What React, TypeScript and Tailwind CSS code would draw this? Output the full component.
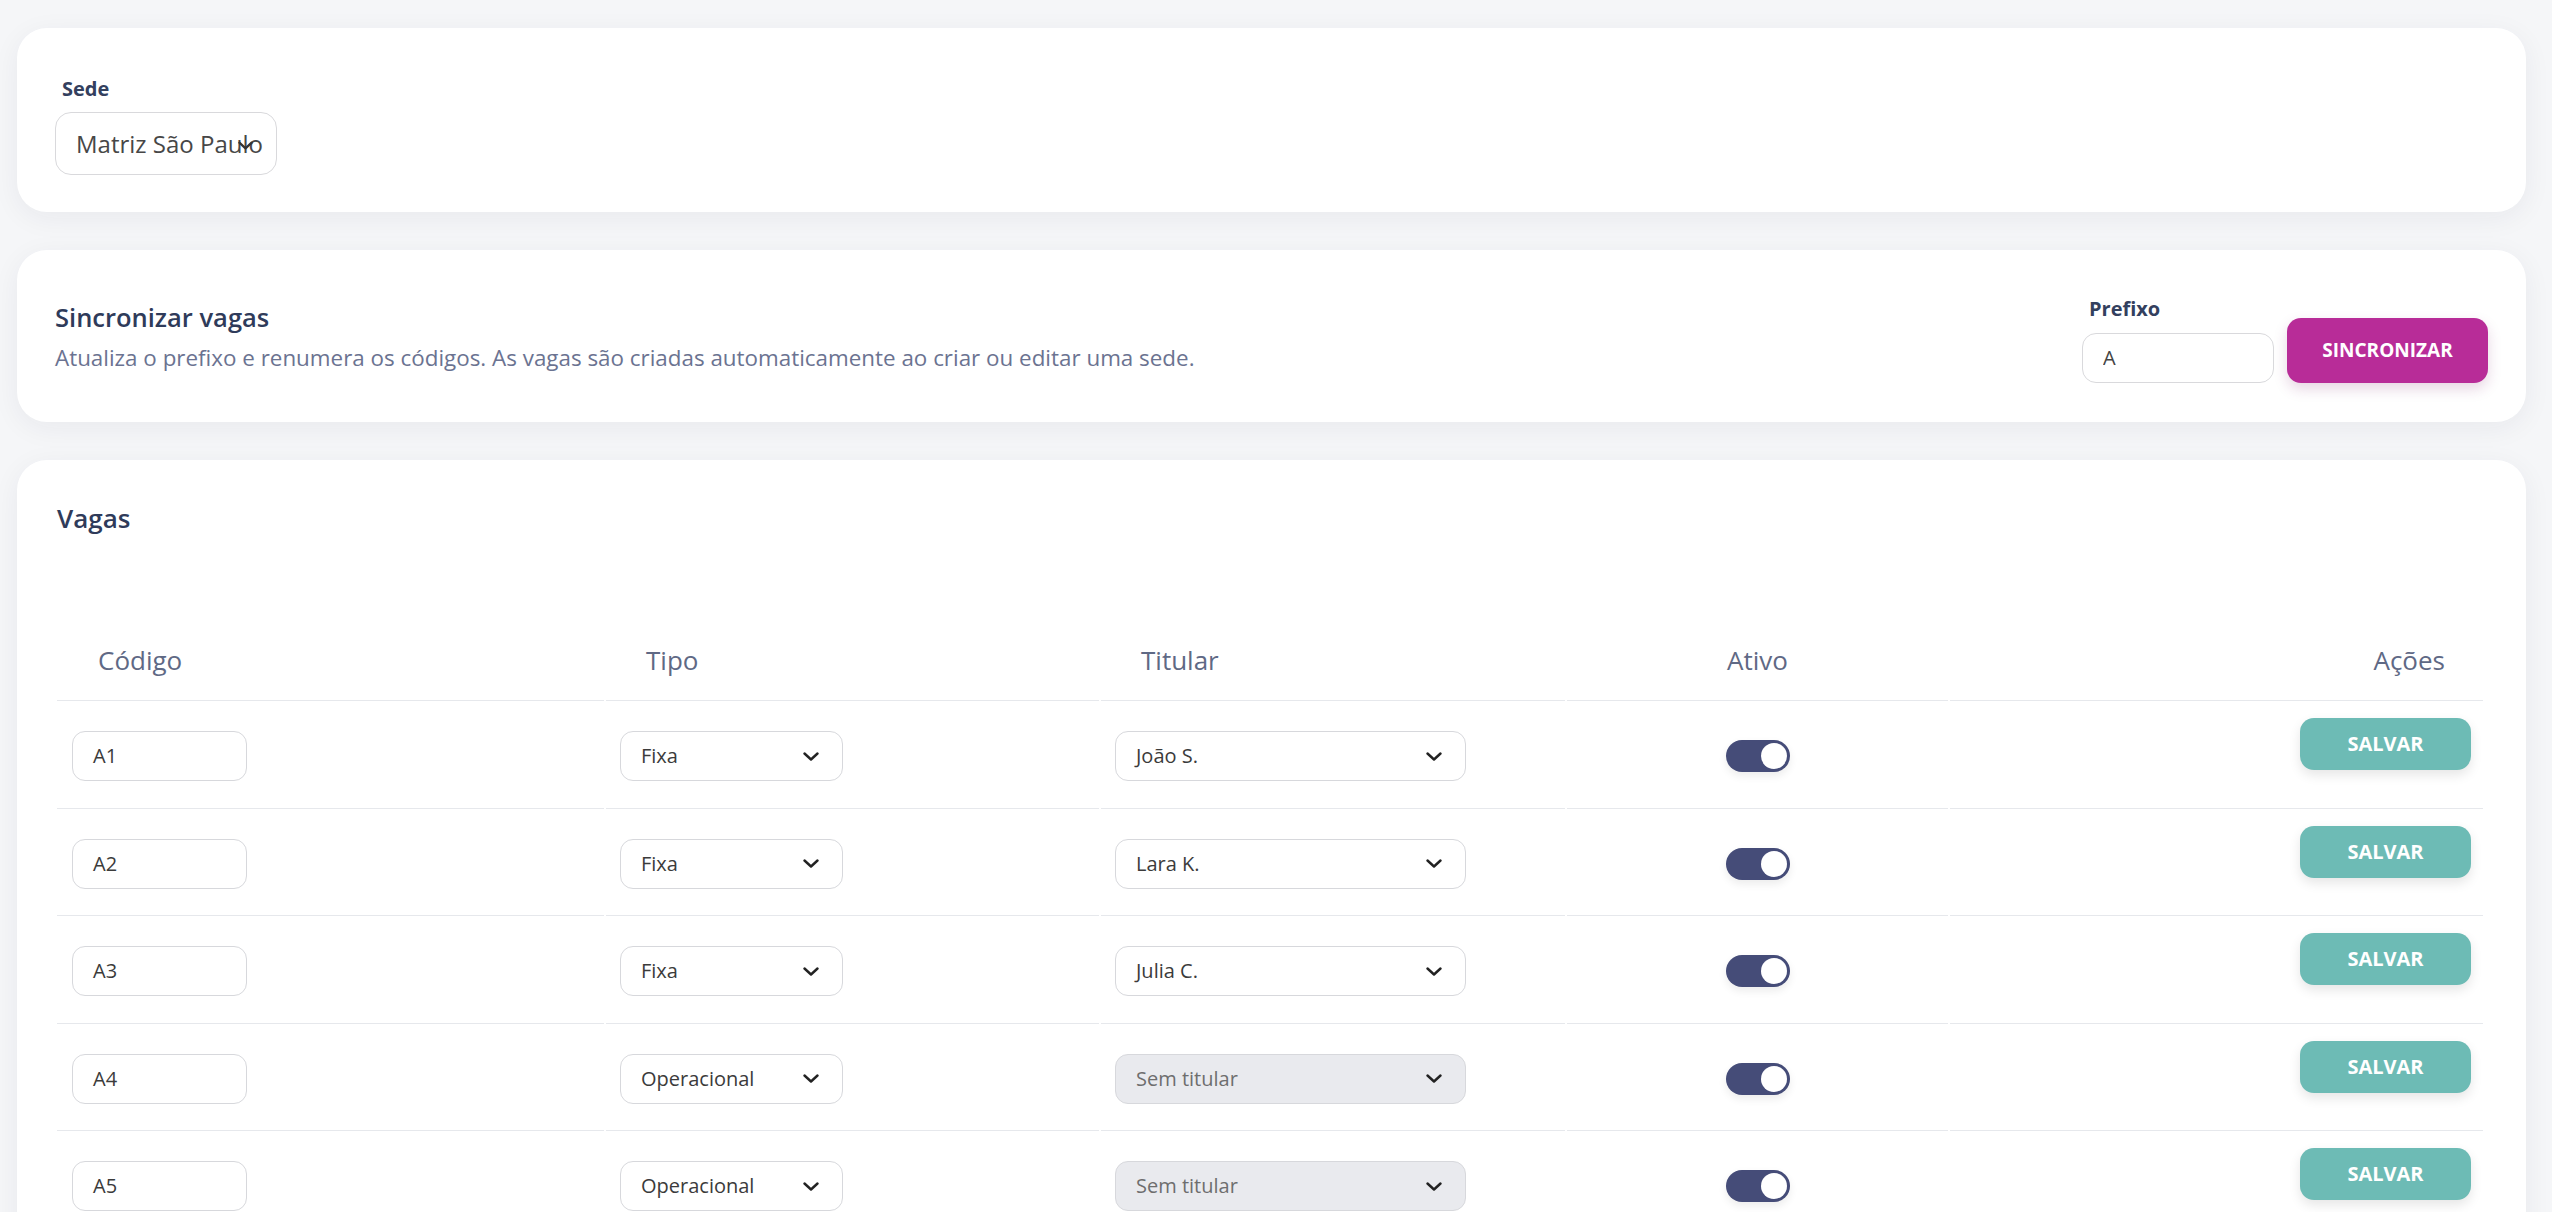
import React, { useState } from 'react';

type Vaga = {
  codigo: string;
  tipo: string;
  titular: string | null;
  ativo: boolean;
};

const vagasIniciais: Vaga[] = [
  { codigo: 'A1', tipo: 'Fixa', titular: 'João S.', ativo: true },
  { codigo: 'A2', tipo: 'Fixa', titular: 'Lara K.', ativo: true },
  { codigo: 'A3', tipo: 'Fixa', titular: 'Julia C.', ativo: true },
  { codigo: 'A4', tipo: 'Operacional', titular: null, ativo: true },
  { codigo: 'A5', tipo: 'Operacional', titular: null, ativo: true },
  { codigo: 'A6', tipo: 'Operacional', titular: null, ativo: true },
];

const Chevron = ({ className = '' }: { className?: string }) => (
  <svg viewBox="0 0 16 9" className={className} fill="none">
    <path d="M1.5 1.5 8 7.5l6.5-6" stroke="currentColor" strokeWidth="2.4" strokeLinecap="round" strokeLinejoin="round" />
  </svg>
);

const Toggle = ({ on, onClick }: { on: boolean; onClick: () => void }) => (
  <button
    onClick={onClick}
    className={`flex items-center w-[64px] h-[32px] rounded-full px-[3px] shadow-[0_4px_8px_rgba(0,0,0,0.08)] ${on ? 'bg-[#454c78] justify-end' : 'bg-[#c9ccd6] justify-start'}`}
  >
    <span className="w-[26px] h-[26px] rounded-full bg-white" />
  </button>
);

export default function App() {
  const [vagas, setVagas] = useState(vagasIniciais);
  const [prefixo, setPrefixo] = useState('A');

  const card = 'bg-white rounded-[30px] shadow-[0_6px_28px_rgba(30,40,60,0.06)]';
  const field = 'h-[50px] rounded-[13px] border border-[#d7d8dc] text-[20px] text-[#3b3b3b] flex items-center';
  const headCell = 'h-[80px] flex items-center border-b border-[#e6e8ec] text-[26px] font-medium text-[#5f6985]';
  const bodyCell = 'h-[107.5px] flex items-center border-b border-[#e6e8ec] pt-[4px]';

  return (
    <div className="min-h-screen bg-[#f5f6f8] pl-[17px] pr-[26px] pt-[28px] flex flex-col gap-[38px] font-['Open_Sans',sans-serif]">
      {/* sede */}
      <div className={`${card} px-[38px] pt-[46px] pb-[37px]`}>
        <div className="pl-[7px] mb-[8px] text-[20px] leading-[30px] font-bold text-[#33405e]">Sede</div>
        <div className="relative w-[222px] h-[63px] rounded-[16px] border border-[#d9d9dc] overflow-hidden flex items-center pl-[20px]">
          <span className="text-[24px] text-[#474747] whitespace-nowrap">Matriz São Paulo</span>
          <Chevron className="absolute left-[182px] top-[28px] w-[15px] h-[9px] text-[#333]" />
        </div>
      </div>

      {/* sincronizar */}
      <div className={`${card} h-[172px] px-[38px] flex items-center justify-between`}>
        <div>
          <div className="text-[25.5px] leading-[34px] font-semibold text-[#2f3b5a]">Sincronizar vagas</div>
          <div className="mt-[9px] text-[22.4px] leading-[30px] text-[#6b7391]">
            Atualiza o prefixo e renumera os códigos. As vagas são criadas automaticamente ao criar ou editar uma sede.
          </div>
        </div>
        <div className="flex items-end gap-[13px] pt-[4px]">
          <div>
            <div className="pl-[7px] mb-[9px] text-[20px] leading-[30px] font-bold text-[#33405e]">Prefixo</div>
            <input
              value={prefixo}
              onChange={e => setPrefixo(e.target.value)}
              className="w-[192px] h-[50px] rounded-[14px] border border-[#d9d9dc] pl-[20px] text-[20px] text-[#444] outline-none"
            />
          </div>
          <button className="w-[201px] h-[65px] rounded-[14px] bg-[#b82c98] text-white text-[19px] font-bold shadow-[0_6px_14px_rgba(120,30,100,0.18)]">
            SINCRONIZAR
          </button>
        </div>
      </div>

      {/* vagas */}
      <div className={`${card} pl-[40px] pr-[43px] pt-[40px] pb-[40px]`}>
        <div className="text-[26px] leading-[36px] font-semibold text-[#2f3b5a] mb-[85px]">Vagas</div>
        <div className="grid grid-cols-[547px_493px_464px_381px_533px] gap-x-[2px]">
          <div className={`${headCell} pl-[41px]`}>Código</div>
          <div className={`${headCell} pl-[40px]`}>Tipo</div>
          <div className={`${headCell} pl-[40px]`}>Titular</div>
          <div className={`${headCell} justify-center`}>Ativo</div>
          <div className={`${headCell} justify-end pr-[38px]`}>Ações</div>

          {vagas.map((v, i) => (
            <React.Fragment key={v.codigo}>
              <div className={`${bodyCell} pl-[15px]`}>
                <div className={`${field} w-[175px] pl-[20px]`}>{v.codigo}</div>
              </div>
              <div className={`${bodyCell} pl-[14px]`}>
                <div className={`${field} w-[223px] pl-[20px] pr-[23px] justify-between`}>
                  <span>{v.tipo}</span>
                  <Chevron className="w-[16px] h-[9px] text-[#222]" />
                </div>
              </div>
              <div className={`${bodyCell} pl-[14px]`}>
                <div className={`${field} w-[351px] pl-[20px] pr-[23px] justify-between ${v.titular ? '' : 'bg-[#e9eaee] text-[#6e6e6e]'}`}>
                  <span>{v.titular ?? 'Sem titular'}</span>
                  <Chevron className="w-[16px] h-[9px] text-[#222]" />
                </div>
              </div>
              <div className={`${bodyCell} justify-center`}>
                <Toggle
                  on={v.ativo}
                  onClick={() => setVagas(prev => prev.map((x, j) => (j === i ? { ...x, ativo: !x.ativo } : x)))}
                />
              </div>
              <div className="h-[107.5px] flex items-center justify-end border-b border-[#e6e8ec] pr-[12px] pb-[20px]">
                <button className="w-[171px] h-[52px] rounded-[14px] bg-[#6dbbb5] text-white text-[20px] font-bold shadow-[0_5px_12px_rgba(0,0,0,0.1)]">
                  SALVAR
                </button>
              </div>
            </React.Fragment>
          ))}
        </div>
      </div>
    </div>
  );
}
